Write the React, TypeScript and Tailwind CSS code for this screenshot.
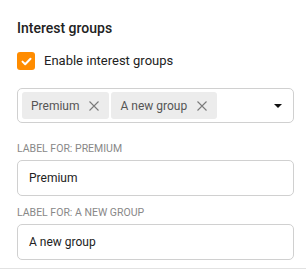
function Chip({ label }: { label: string }) {
  return (
    <div className="flex h-[27px] items-center gap-[10px] rounded-[3px] bg-[#ececec] pl-[9px] pr-[10px] text-[12px] text-[#555]">
      <span>{label}</span>
      <svg width="10" height="10" viewBox="0 0 10 10" fill="none">
        <path d="M0.5 0.5 L9.5 9.5 M9.5 0.5 L0.5 9.5" stroke="#7a7a7a" strokeWidth="1.1" />
      </svg>
    </div>
  );
}

function LabeledInput({ label, value }: { label: string; value: string }) {
  return (
    <div className="flex flex-col">
      <label className="h-[14px] text-[10.5px] leading-[14px] uppercase text-[#888]">{label}</label>
      <div className="mt-[4px] flex h-[36px] items-center rounded-[5px] border border-[#d0d0d0] px-[11px] text-[12px] text-[#222]">
        {value}
      </div>
    </div>
  );
}

export default function App() {
  return (
    <div className="h-[270px] w-[306px] bg-white font-['Roboto',sans-serif]">
      <div className="flex flex-col border-b border-[#e2e2e2] pl-[17px] pr-[12px] pt-[18px] pb-[8px]">
        <h2 className="text-[14px] font-medium leading-[20px] text-[#222]">Interest groups</h2>
        <label className="mt-[13px] flex h-[20px] items-center gap-[9px]">
          <span className="flex h-[18px] w-[18px] items-center justify-center rounded-[3px] bg-[#ff8c00]">
            <svg width="11" height="9" viewBox="0 0 11 9" fill="none">
              <path d="M1.5 4.6 L4.2 7.2 L9.5 1.8" stroke="white" strokeWidth="2" strokeLinecap="round" strokeLinejoin="round" />
            </svg>
          </span>
          <span className="text-[13px] text-[#222]">Enable interest groups</span>
        </label>
        <div className="mt-[17px] flex h-[35px] items-center rounded-[5px] border border-[#d0d0d0] pl-[4px] pr-[11px]">
          <div className="flex flex-1 gap-[2px]">
            <Chip label="Premium" />
            <Chip label="A new group" />
          </div>
          <svg width="8" height="4" viewBox="0 0 8 4">
            <path d="M0 0 L8 0 L4 4 Z" fill="#111" />
          </svg>
        </div>
        <div className="mt-[19px] flex flex-col gap-[10px]">
          <LabeledInput label="Label for: Premium" value="Premium" />
          <LabeledInput label="Label for: A new group" value="A new group" />
        </div>
      </div>
    </div>
  );
}
